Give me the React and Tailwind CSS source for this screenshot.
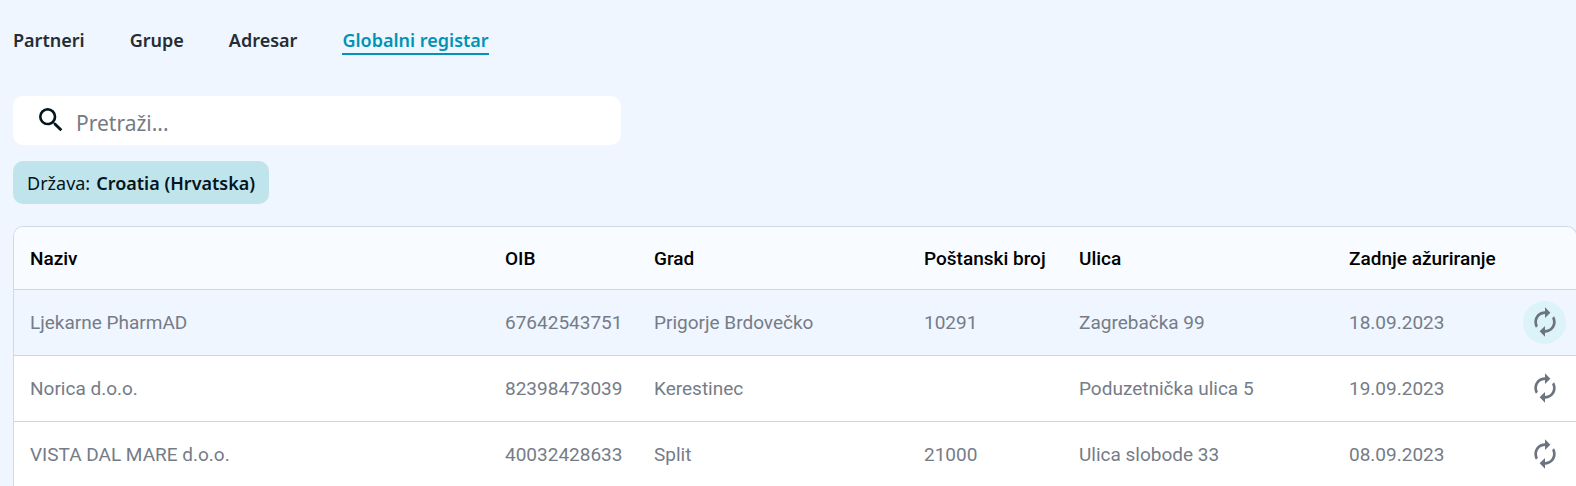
import React, { useState } from 'react';
import { MdAutorenew, MdSearch } from 'react-icons/md';

const TABS = ['Partneri', 'Grupe', 'Adresar', 'Globalni registar'];

const PARTNERI = [
    { naziv: 'Ljekarne PharmAD', oib: '67642543751', grad: 'Prigorje Brdovečko', posta: '10291', ulica: 'Zagrebačka 99', datum: '18.09.2023' },
    { naziv: 'Norica d.o.o.', oib: '82398473039', grad: 'Kerestinec', posta: '', ulica: 'Poduzetnička ulica 5', datum: '19.09.2023' },
    { naziv: 'VISTA DAL MARE d.o.o.', oib: '40032428633', grad: 'Split', posta: '21000', ulica: 'Ulica slobode 33', datum: '08.09.2023' }
];

const Tabs = ({ active }) => (
    <nav className="flex gap-[45px] text-[18px] leading-6 font-semibold text-[#262c33]">
        {TABS.map(tab => (
            <a
                key={tab}
                href="#"
                className={tab === active ? 'border-b-2 border-[#0093b5] pb-px text-[#0093b5]' : 'border-b-2 border-transparent pb-px'}
            >
                {tab}
            </a>
        ))}
    </nav>
);

const Search = () => {
    const [pojam, setPojam] = useState('');

    return (
        <label className="mt-[41px] flex h-[49px] w-full max-w-[608px] items-center gap-[9px] rounded-[10px] bg-white pl-[22px] pr-4">
            <MdSearch className="mb-0.5 size-8 shrink-0 text-[#04151b]" />
            <input
                type="text"
                aria-label="Pretraži"
                placeholder="Pretraži..."
                className="w-full pt-1 text-[21px] leading-8 text-gray-800 outline-none placeholder:text-[#757b83]"
                value={pojam}
                onChange={e => setPojam(e.target.value)}
            />
        </label>
    );
}

const Registar = () => (
    <div className="mt-[22px] -mr-px overflow-hidden rounded-t-[10px] border border-b-0 border-[#d1d9e3] bg-white font-[Roboto,sans-serif] text-[19px] leading-6">
        <table className="w-full table-fixed text-left whitespace-nowrap">
            <colgroup>
                <col className="w-[475px]" />
                <col className="w-[149px]" />
                <col className="w-[270px]" />
                <col className="w-[155px]" />
                <col className="w-[270px]" />
                <col className="w-[160px]" />
                <col className="w-[83px]" />
            </colgroup>
            <thead>
                <tr className="h-[62px] border-b border-[#d1d5de] bg-[#f8fbff] text-black">
                    <th className="px-4 pt-0.5 font-medium">Naziv</th>
                    <th className="px-4 pt-0.5 font-medium">OIB</th>
                    <th className="px-4 pt-0.5 font-medium">Grad</th>
                    <th className="px-4 pt-0.5 font-medium">Poštanski broj</th>
                    <th className="px-4 pt-0.5 font-medium">Ulica</th>
                    <th className="px-4 pt-0.5 font-medium">Zadnje ažuriranje</th>
                    <th></th>
                </tr>
            </thead>
            <tbody className="text-[#757c87]">
                {PARTNERI.map((partner, i) => (
                    <tr key={partner.oib} className={i === 0 ? 'h-[66px] border-b border-[#d1d5de] bg-[#eff6ff]' : 'h-[66px] border-b border-[#d1d5de]'}>
                        <td className="px-4 pt-0.5">{partner.naziv}</td>
                        <td className="px-4 pt-0.5">{partner.oib}</td>
                        <td className="px-4 pt-0.5">{partner.grad}</td>
                        <td className="px-4 pt-0.5">{partner.posta}</td>
                        <td className="px-4 pt-0.5">{partner.ulica}</td>
                        <td className="px-4 pt-0.5">{partner.datum}</td>
                        <td className="pr-2.5">
                            <button
                                type="button"
                                aria-label={`Ažuriraj ${partner.naziv}`}
                                className={i === 0 ? 'ml-auto flex size-[43px] items-center justify-center rounded-full bg-[#dbf3f9]' : 'ml-auto flex size-[43px] items-center justify-center rounded-full'}
                            >
                                <MdAutorenew className="size-8 text-[#6b747f]" />
                            </button>
                        </td>
                    </tr>
                ))}
            </tbody>
        </table>
    </div>
);

const App = () => {
    return (
        <main className="min-h-screen overflow-hidden bg-[#eff6ff] pt-7 pl-[13px] font-['Noto_Sans',sans-serif]">
            <Tabs active="Globalni registar" />
            <Search />
            <button type="button" className="mt-4 flex h-[43px] items-center gap-1.5 rounded-[10px] bg-[#c0e4eb] px-3.5 text-[18px] leading-6 text-[#04151b]">
                Država: <span className="font-semibold">Croatia (Hrvatska)</span>
            </button>
            <Registar />
        </main>
    );
}

export default App;
